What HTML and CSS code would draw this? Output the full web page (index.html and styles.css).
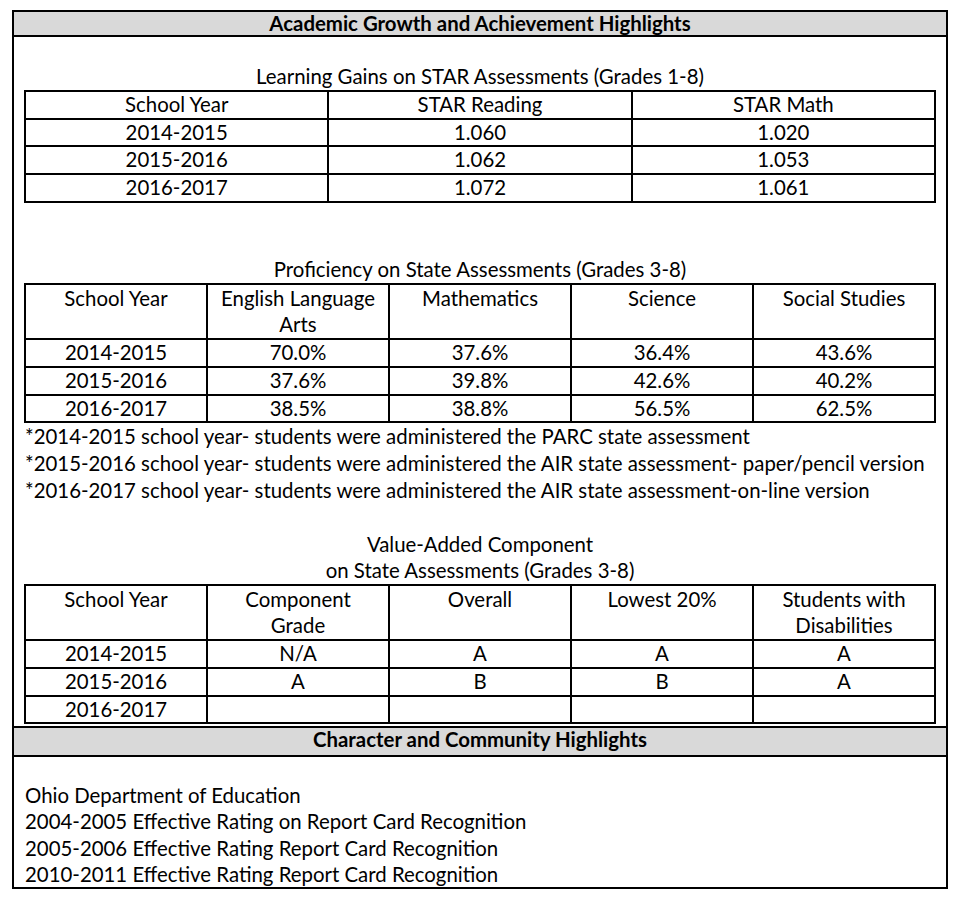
FILE: index.html
```html
<!DOCTYPE html>
<html lang="en">
<head>
<meta charset="utf-8">
<title>Academic Growth and Achievement Highlights</title>
<link rel="stylesheet" href="styles.css">
</head>
<body>
<div class="doc">
  <div class="band">Academic Growth and Achievement Highlights</div>
  <div class="section">
    <div class="blank first"></div>
    <p class="caption">Learning Gains on STAR Assessments (Grades 1-8)</p>
    <table class="grid">
      <tr><td>School Year</td><td>STAR Reading</td><td>STAR Math</td></tr>
      <tr><td>2014-2015</td><td>1.060</td><td>1.020</td></tr>
      <tr><td>2015-2016</td><td>1.062</td><td>1.053</td></tr>
      <tr><td>2016-2017</td><td>1.072</td><td>1.061</td></tr>
    </table>
    <div class="blank"></div>
    <div class="blank"></div>
    <p class="caption">Proficiency on State Assessments (Grades 3-8)</p>
    <table class="grid">
      <tr class="head"><td>School Year</td><td>English Language<br>Arts</td><td>Mathematics</td><td>Science</td><td>Social Studies</td></tr>
      <tr><td>2014-2015</td><td>70.0%</td><td>37.6%</td><td>36.4%</td><td>43.6%</td></tr>
      <tr><td>2015-2016</td><td>37.6%</td><td>39.8%</td><td>42.6%</td><td>40.2%</td></tr>
      <tr><td>2016-2017</td><td>38.5%</td><td>38.8%</td><td>56.5%</td><td>62.5%</td></tr>
    </table>
    <p class="line">*2014-2015 school year- students were administered the PARC state assessment</p>
    <p class="line">*2015-2016 school year- students were administered the AIR state assessment- paper/pencil version</p>
    <p class="line">*2016-2017 school year- students were administered the AIR state assessment-on-line version</p>
    <div class="blank"></div>
    <p class="caption">Value-Added Component</p>
    <p class="caption">on State Assessments (Grades 3-8)</p>
    <table class="grid">
      <tr class="head"><td>School Year</td><td>Component<br>Grade</td><td>Overall</td><td>Lowest 20%</td><td>Students with<br>Disabilities</td></tr>
      <tr><td>2014-2015</td><td>N/A</td><td>A</td><td>A</td><td>A</td></tr>
      <tr><td>2015-2016</td><td>A</td><td>B</td><td>B</td><td>A</td></tr>
      <tr><td>2016-2017</td><td></td><td></td><td></td><td></td></tr>
    </table>
    <div class="gap"></div>
  </div>
  <div class="band band-mid">Character and Community Highlights</div>
  <div class="section section-last">
    <div class="blank"></div>
    <p class="line">Ohio Department of Education</p>
    <p class="line">2004-2005 Effective Rating on Report Card Recognition</p>
    <p class="line">2005-2006 Effective Rating Report Card Recognition</p>
    <p class="line">2010-2011 Effective Rating Report Card Recognition</p>
  </div>
</div>
</body>
</html>
```

FILE: styles.css
```css
html, body {
  margin: 0;
  padding: 0;
  background: #ffffff;
}

body {
  font-family: "Lato", "Open Sans", sans-serif;
  font-size: 20.4px;
  color: #000000;
}

.doc {
  box-sizing: border-box;
  width: 936px;
  margin: 10px 0 0 12px;
  border: 2px solid #000000;
}

.band {
  box-sizing: border-box;
  height: 25px;
  line-height: 23px;
  padding-bottom: 2px;
  background: #d9d9d9;
  border-bottom: 2px solid #000000;
  text-align: center;
  font-weight: 700;
}

.band-mid {
  box-sizing: content-box;
  border-top: 2px solid #000000;
}

.section {
  padding: 0 10px;
  line-height: 26.8px;
}

.section-last {
  line-height: 26.4px;
}

.blank {
  height: 26.8px;
}

.section-last .blank {
  height: 24.4px;
}

.blank.first {
  height: 26px;
}

.caption,
.line {
  margin: 0;
  white-space: nowrap;
}

.caption {
  text-align: center;
}

.line {
  padding-left: 1px;
}

.gap {
  height: 2px;
}

.grid {
  width: 100%;
  table-layout: fixed;
  border-collapse: collapse;
  border: 2px solid #000000;
}

.grid td {
  border: 2px solid #000000;
  padding: 0 4px;
  height: 25.75px;
  line-height: 24px;
  text-align: center;
  vertical-align: top;
}

.grid .head td {
  height: 53px;
  line-height: 26px;
}
```
